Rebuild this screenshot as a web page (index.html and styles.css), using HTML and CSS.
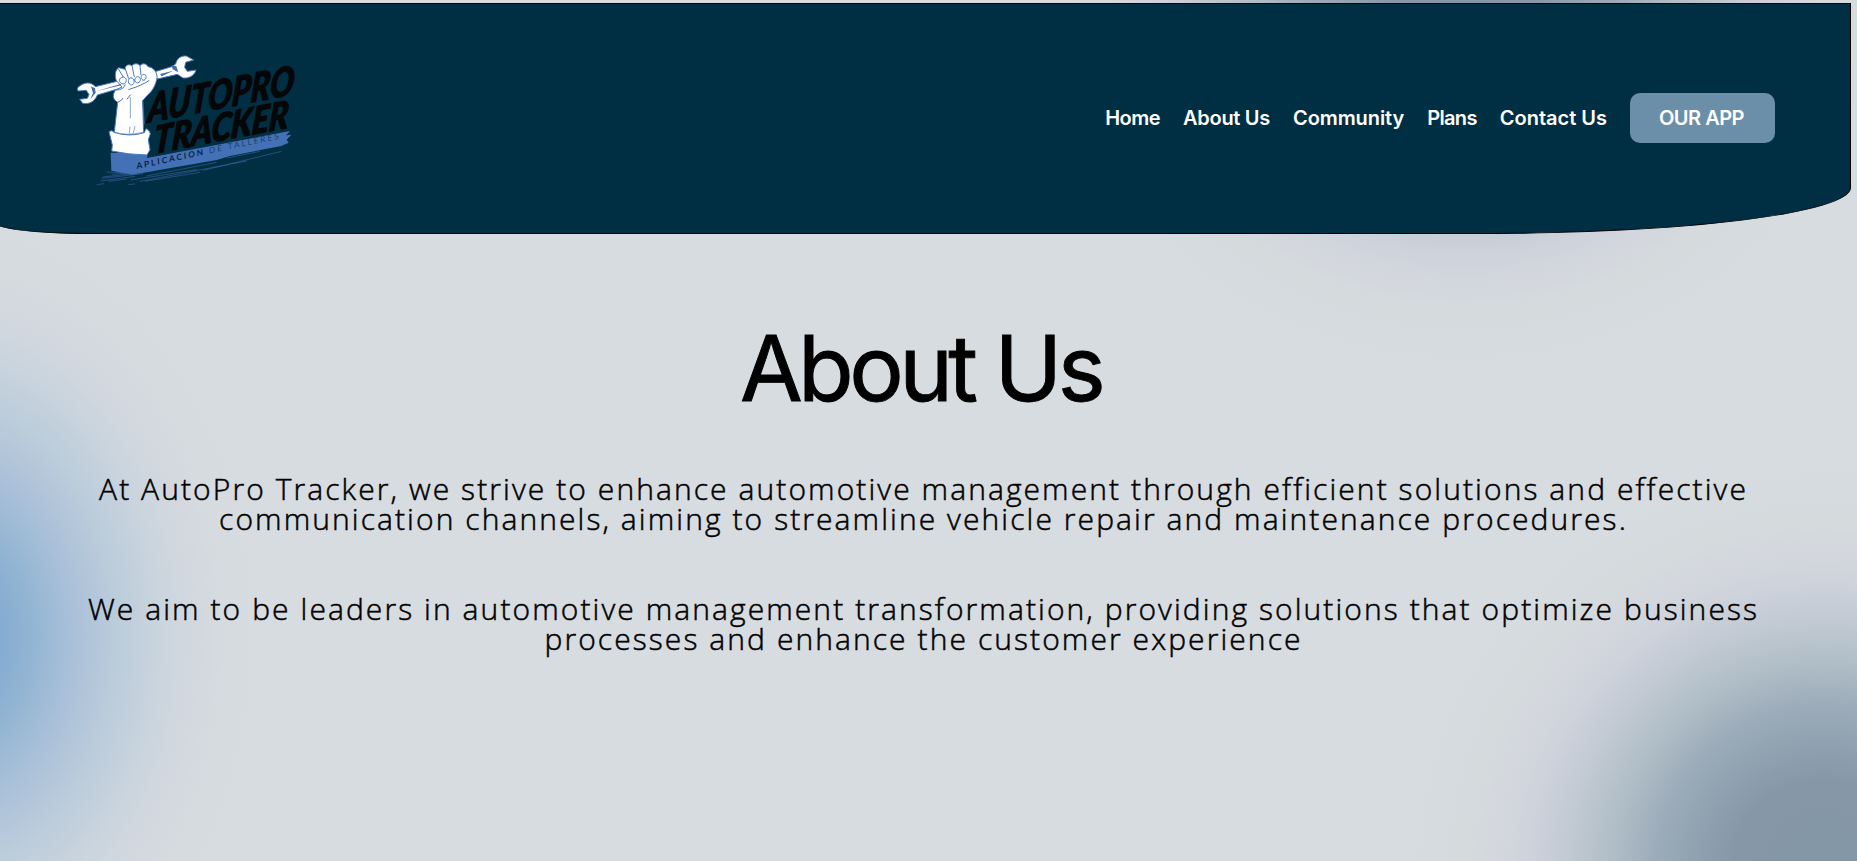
FILE: index.html
```html
<!DOCTYPE html>
<html lang="en">
<head>
<meta charset="utf-8">
<title>AutoPro Tracker - About Us</title>
<link rel="stylesheet" href="styles.css">
</head>
<body>
<header class="site-header">
  <a class="brand" href="#" aria-label="AutoPro Tracker">
    <svg class="logo" width="260" height="160" viewBox="0 0 780 480">
      <path d="M152 338 L263 340 L261 354 L690 273 L678 286 L694 284 L680 299 L686 308 L664 318 L510 348 L470 360 L216 404 L154 392Z" fill="#4470b5"/>
      <g stroke="#4470b5" stroke-width="2" fill="none" opacity=".75">
        <path d="M140 396L225 400L128 411M155 403L280 392M125 415L250 401M122 423L225 409M110 434L132 431M145 424L200 417M212 420L410 389M260 408L470 367M240 424L560 363M205 434L225 432M255 424L420 397M430 391L665 334M500 354L600 334"/>
      </g>
      <g fill="#fff" stroke="#4b78bd" stroke-width="3" stroke-linejoin="round">
        <path d="M52 144 C72 124 94 125 106 140 L184 121 L190 142 L112 165 C104 184 91 193 68 190 L59 178 L82 175 L87 164 L79 151 L54 153Z"/>
        <path d="M285 95 L335 80 L347 72 C350 56 363 46 379 48 L401 60 L377 67 L374 82 L382 94 L408 90 C403 109 383 116 369 114 L352 103 L292 117Z"/>
        <path d="M162 285 L173 187 C156 178 158 162 166 151 L186 141 L169 122 C163 105 166 90 176 83 L195 88 C195 76 205 71 216 77 C222 69 235 70 240 77 C247 68 260 71 264 80 C281 82 292 97 291 113 C288 132 280 151 262 166 L248 182 L251 285Z"/>
        <path d="M147 275 Q156 268 163 277 Q207 292 253 278 L258 266 Q269 270 271 281 L265 299 L270 329 L261 345 Q205 344 155 333 L157 315Z"/>
        <path d="M190 111 C175 112 174 129 189 132 C201 131 203 113 190 111ZM213 113 C202 116 203 135 215 135 C226 132 224 114 213 113ZM233 110 C221 112 222 128 233 129 C245 126 243 111 233 110ZM251 103 C240 105 242 121 252 121 C261 116 260 103 251 103Z"/>
        <path d="M174 85L190 111M196 87L206 116M216 77L223 111M240 77L243 105M169 150Q190 150 196 133M205 149Q249 135 268 121M173 187Q187 181 189 174M201 178L211 164" fill="none"/>
        <path d="M211 172V235M248 182L253 252M225 258L220 279M210 260L208 279M160 277Q200 288 250 277" fill="none" stroke-width="2"/>
      </g>
      <path d="M93 139 L105 145 L107 158 L91 178 L99 159Z M108 154 L182 132 L183 136Z M335 76 L349 79 L355 97 L338 88Z M300 102 L340 92 L305 109Z" fill="#416daf"/>
      <g transform="matrix(.982 -.19 -.08 1 262 248)">
        <text class="logo-name" x="0" y="0" textLength="446" lengthAdjust="spacingAndGlyphs">AUTOPRO</text>
      </g>
      <g transform="matrix(.982 -.19 -.08 1 280 341)">
        <text class="logo-name logo-name-low" x="0" y="0" textLength="410" lengthAdjust="spacingAndGlyphs">TRACKER</text>
      </g>
      <g transform="matrix(.978 -.208 .08 1 230 387)">
        <text class="logo-tag" x="0" y="0" textLength="438">APLICACION <tspan class="logo-tag-thin">DE TALLERES</tspan></text>
      </g>
    </svg>
  </a>
  <nav class="nav">
    <a class="home" href="#">Home</a>
    <a class="about" href="#">About Us</a>
    <a class="community" href="#">Community</a>
    <a class="plans" href="#">Plans</a>
    <a class="contact" href="#">Contact Us</a>
    <a class="button" href="#">OUR APP</a>
  </nav>
</header>
<main class="content">
  <h1>About Us</h1>
  <p>At AutoPro Tracker, we strive to enhance automotive management through efficient solutions and effective<br>communication channels, aiming to streamline vehicle repair and maintenance procedures.</p>
  <p>We aim to be leaders in automotive management transformation, providing solutions that optimize business<br>processes and enhance the customer experience</p>
</main>
</body>
</html>
```
FILE: styles.css
```css
* { box-sizing: border-box; }
html { height: 100%; overflow: hidden; }
body {
  margin: 0;
  height: 861px;
  padding-top: 3px;
  overflow: hidden;
  color: #000;
  font-family: "Open Sans", sans-serif;
  background:
    radial-gradient(ellipse 428px 408px at 1465px -36px, #8397a6 0, #8698a7 18%, #90a3b1 27%, #9cabb9 37%, #b0bec7 50%, #c1c9d2 62%, #ced3dc 72%, #d3d6dd 78%, #d5dadd 84%, #d7dce0 100%, transparent 100%),
    radial-gradient(ellipse 330px 433px at -60px 636px, #7ca5d1 0, #84abd2 18%, #93b5d3 28%, #abc1d9 41%, #bdcddb 55%, #cbd5de 68%, #d3d8df 78%, #d6dbdf 86%, #d7dce0 100%, transparent 100%),
    radial-gradient(ellipse 420px 408px at 1825px 870px, #8397a6 0, #8698a7 22%, #90a3b1 32%, #9cabb9 40%, #b0bec7 51%, #c1c9d2 61%, #ced3dc 71%, #d3d6dd 77%, #d5dadd 84%, #d7dce0 100%, transparent 100%),
    #d7dce0;
}
.site-header {
  width: 1857px;
  height: 231px;
  margin-left: -6px;
  padding: 36px 75px 0 65px;
  display: flex;
  justify-content: space-between;
  align-items: flex-start;
  background: #002f43;
  border: 1px solid #000;
  border-radius: 0 0 20% 5%;
}
.logo { display: block; overflow: visible; }
.logo-name { font: italic 900 122px "Lato", sans-serif; fill: #050607; stroke: #050607; stroke-width: 4; stroke-linejoin: round; }
.logo-name-low { font-size: 115px; }
.logo-tag { font: 700 25px "Lato", sans-serif; fill: #0c2345; letter-spacing: 2px; }
.logo-tag-thin { font-weight: 400; fill: #1d4268; }
.nav {
  display: flex;
  align-items: center;
  gap: 23px;
  padding-top: 53px;
  font: 600 20px/50px "Inter", sans-serif;
}
.nav a { color: #fff; text-decoration: none; white-space: nowrap; letter-spacing: -.5px; }
.nav .about { letter-spacing: -.3px; }
.nav .community { letter-spacing: -.08px; }
.nav .plans { letter-spacing: -.65px; }
.nav .contact { letter-spacing: 0; }
.nav .button {
  width: 145px;
  height: 50px;
  padding-right: 2px;
  border-radius: 10px;
  text-align: center;
  background: #6b8fa9;
}
.content { padding-top: 78px; width: 1847px; text-align: center; }
h1 {
  margin: 0;
  padding-right: 6px;
  font: 400 91px/112px "Inter", sans-serif;
  letter-spacing: -4.6px;
  -webkit-text-stroke: .9px #000;
}
p {
  margin: 50px 0 0;
  font-size: 30px;
  font-weight: 300;
  line-height: 30px;
  letter-spacing: 2.08px;
  white-space: nowrap;
  -webkit-text-stroke: .5px #000;
}
p + p { margin-top: 60px; }
```
